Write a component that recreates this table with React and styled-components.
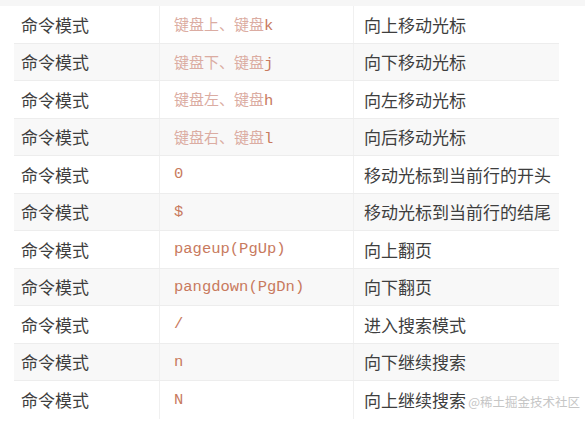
import styled, { createGlobalStyle } from 'styled-components';

const GlobalStyle = createGlobalStyle`
	body {
		margin: 0;
		background: #fff;
		font-family: 'Noto Sans', 'Noto Sans CJK SC', sans-serif;
	}
`;

const Page = styled.div`
	position: relative;
	width: 585px;
	height: 421px;
	overflow: hidden;
	background: #fff;
`;

const TopBand = styled.div`
	height: 6px;
	background: #f6f6f6;
`;

const Table = styled.div`
	margin-left: 14px;
	width: 545px;
	display: flex;
	flex-direction: column;
`;

const Row = styled.div`
	display: grid;
	grid-template-columns: 145px 194px 1fr;
	height: 37.5px;
	box-sizing: border-box;
	border-bottom: 1px solid #ededed;
	background: ${(props) => (props.$shaded ? '#f8f8f8' : '#fff')};
	&:last-child {
		border-bottom: none;
	}
`;

const Cell = styled.div`
	display: flex;
	align-items: center;
	padding-left: ${(props) => props.$pad}px;
	border-left: ${(props) => (props.$divider ? '1px solid #f0f0f0' : 'none')};
	font-size: 17px;
	color: #3e3e3e;
	white-space: nowrap;
`;

const Code = styled.span`
	font-family: 'Liberation Mono', 'Noto Sans CJK SC', monospace;
	font-size: 15.5px;
	color: #c87a5e;
`;

const Cjk = styled.span`
	font-family: 'Noto Sans CJK SC', sans-serif;
	font-size: 15px;
	color: #dbaca2;
`;

const Watermark = styled.div`
	position: absolute;
	right: 5px;
	bottom: 10px;
	font-family: 'Noto Sans CJK SC', serif;
	font-size: 12.5px;
	color: #c6c6c6;
`;

const rows = [
	{ code: [['cjk', '键盘上、键盘'], ['en', 'k']], desc: '向上移动光标' },
	{ code: [['cjk', '键盘下、键盘'], ['en', 'j']], desc: '向下移动光标' },
	{ code: [['cjk', '键盘左、键盘'], ['en', 'h']], desc: '向左移动光标' },
	{ code: [['cjk', '键盘右、键盘'], ['en', 'l']], desc: '向后移动光标' },
	{ code: [['en', '0']], desc: '移动光标到当前行的开头' },
	{ code: [['en', '$']], desc: '移动光标到当前行的结尾' },
	{ code: [['en', 'pageup(PgUp)']], desc: '向上翻页' },
	{ code: [['en', 'pangdown(PgDn)']], desc: '向下翻页' },
	{ code: [['en', '/']], desc: '进入搜索模式' },
	{ code: [['en', 'n']], desc: '向下继续搜索' },
	{ code: [['en', 'N']], desc: '向上继续搜索' },
];

const App = () => {
	return (
		<Page>
			<GlobalStyle />
			<TopBand />
			<Table>
				{rows.map((row, i) => (
					<Row key={i} $shaded={i % 2 === 1}>
						<Cell $pad={7}>命令模式</Cell>
						<Cell $pad={14} $divider>
							<Code>
								{row.code.map(([kind, text], j) =>
									kind === 'cjk' ? <Cjk key={j}>{text}</Cjk> : <span key={j}>{text}</span>
								)}
							</Code>
						</Cell>
						<Cell $pad={10} $divider>
							{row.desc}
						</Cell>
					</Row>
				))}
			</Table>
			<Watermark>@稀土掘金技术社区</Watermark>
		</Page>
	);
};

export default App;
